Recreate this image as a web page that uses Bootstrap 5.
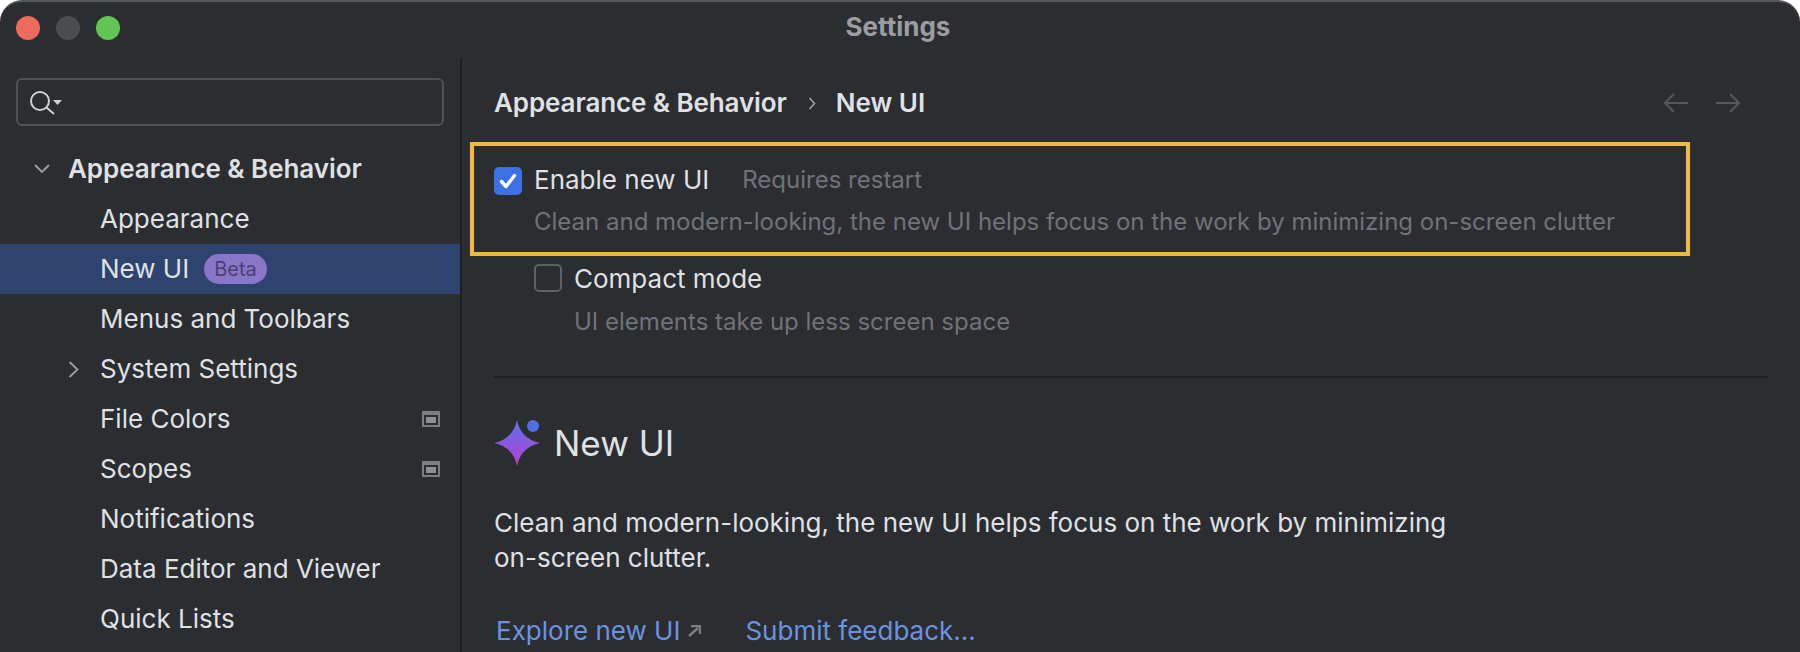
<!doctype html>
<html lang="en">
<head>
<meta charset="utf-8">
<title>Settings</title>
<link href="https://cdn.jsdelivr.net/npm/bootstrap@5.3.0/dist/css/bootstrap.min.css" rel="stylesheet">
<style>
html,body{height:100%;margin:0;background:#fff;overflow:hidden}
body{font-family:Inter,"Noto Sans",sans-serif;font-size:26px;line-height:34px;color:#dfe1e5}
.ij-window{height:652px;background:#2b2d30;border-top:2px solid #55575b;border-radius:22px 22px 0 0;overflow:hidden}
.ij-titlebar{height:56px;position:relative}
.ij-lights{position:absolute;left:16px;top:14px;gap:16px}
.ij-light{width:24px;height:24px;border-radius:50%}
.ij-title{font-weight:700;font-size:26px;color:#9b9da1;line-height:50px;text-align:center;padding-right:4px}
.ij-side{width:460px;flex:none}
.ij-search{margin:20px 16px 0;height:48px;border:2px solid #4e5157;border-radius:6px;padding-left:12px}
.ij-tree{margin-top:18px}
.ij-row{height:50px;padding-left:100px;padding-right:20px;position:relative}
.ij-row svg.ij-chev{position:absolute}
.ij-row.ij-head{padding-left:68px;font-weight:600;letter-spacing:-.05px}
.ij-row.ij-sel{background:#2e436e}
.ij-beta{background:#8a76c6;color:#4b3f75;font-size:20px;line-height:30px;padding:0 10px;border-radius:15px;margin-left:15px}
.ij-main{border-left:2px solid #1e1f22;min-width:0;padding-top:2px}
.ij-crumb{height:82px;padding:4px 60px 0 32px;font-weight:600}
.ij-crumb-first{letter-spacing:-.1px}
.ij-crumb-sep{margin:0 20px 0 21px}
.ij-nav{gap:28px}
.ij-hl{border:4px solid #f0b941;margin-left:8px;width:1220px;height:114px;padding:18px 0 0 20px}
.ij-box{width:28px;height:28px;border-radius:5px;flex:none}
.ij-box-on{background:#3c70e4}
.ij-box-off{border:2px solid #5e6167}
.ij-dim{color:#6f737a;font-size:24px}
.ij-up{line-height:32px;padding-bottom:2px}
.ij-down{line-height:32px;padding-top:2px}
.ij-req{margin-left:33px}
.ij-sub{padding:7px 0 0 40px}
.ij-compact{padding:5px 0 0 72px}
.ij-sub2{padding:10px 0 0 112px}
.ij-rule{border-top:2px solid #1e1f22;margin:37px 32px 0 32px}
.ij-hero{margin:42px 0 0 32px}
.ij-hero-t{font-size:35px;line-height:44px;padding-bottom:2px;font-weight:400;margin:0 0 0 13px}
.ij-para{margin:38px 0 0 32px;line-height:35px}
.ij-links{margin:39px 0 0 34px}
.ij-links a{color:#6b93e0;text-decoration:none}
.ij-submit{margin-left:44px}
</style>
</head>
<body>
<div class="ij-window d-flex flex-column">
  <div class="ij-titlebar flex-none">
    <div class="ij-lights d-flex">
      <div class="ij-light" style="background:#ec6a5e"></div>
      <div class="ij-light" style="background:#4b4c4e"></div>
      <div class="ij-light" style="background:#61c554"></div>
    </div>
    <div class="ij-title">Settings</div>
  </div>
  <div class="d-flex flex-grow-1">
    <div class="ij-side">
      <div class="ij-search d-flex align-items-center">
        <svg width="34" height="28" viewBox="0 0 34 28" fill="none"><circle cx="10" cy="13" r="9" stroke="#ced0d6" stroke-width="2"/><path d="M16.500 19.500l7.500 6.500" stroke="#ced0d6" stroke-width="2"/><path d="M23 12h9l-4.500 5z" fill="#ced0d6"/></svg>
      </div>
      <div class="ij-tree">
        <div class="ij-row ij-head d-flex align-items-center"><svg class="ij-chev" style="left:34px;top:20px" width="16" height="10" viewBox="0 0 16 10" fill="none"><path d="M1 1l7 7 7-7" stroke="#9da0a8" stroke-width="1.800"/></svg>Appearance &amp; Behavior</div>
        <div class="ij-row d-flex align-items-center">Appearance</div>
        <div class="ij-row ij-sel d-flex align-items-center">New UI<span class="ij-beta">Beta</span></div>
        <div class="ij-row d-flex align-items-center">Menus and Toolbars</div>
        <div class="ij-row d-flex align-items-center"><svg class="ij-chev" style="left:68px;top:17px" width="11" height="17" viewBox="0 0 11 17" fill="none"><path d="M1.500 1l8 7.500-8 7.500" stroke="#9da0a8" stroke-width="1.800"/></svg>System Settings</div>
        <div class="ij-row d-flex align-items-center justify-content-between">File Colors<svg width="18" height="16" viewBox="0 0 18 16"><path fill-rule="evenodd" d="M0 0h18v16H0zM2 4v10h14V4z" fill="#7a7e85"/><rect x="4" y="6" width="10" height="6" fill="#8b8f96"/></svg></div>
        <div class="ij-row d-flex align-items-center justify-content-between">Scopes<svg width="18" height="16" viewBox="0 0 18 16"><path fill-rule="evenodd" d="M0 0h18v16H0zM2 4v10h14V4z" fill="#7a7e85"/><rect x="4" y="6" width="10" height="6" fill="#8b8f96"/></svg></div>
        <div class="ij-row d-flex align-items-center">Notifications</div>
        <div class="ij-row d-flex align-items-center">Data Editor and Viewer</div>
        <div class="ij-row d-flex align-items-center">Quick Lists</div>
      </div>
    </div>
    <div class="ij-main flex-grow-1">
      <div class="ij-crumb d-flex align-items-center">
        <span class="ij-crumb-first">Appearance &amp; Behavior</span>
        <svg class="ij-crumb-sep" width="8" height="13" viewBox="0 0 8 13" fill="none"><path d="M1.500 1l5 5.500-5 5.500" stroke="#9da0a8" stroke-width="1.600"/></svg>
        <span>New UI</span>
        <span class="ms-auto d-flex ij-nav">
          <svg width="24" height="20" viewBox="0 0 24 20" fill="none"><path d="M24 10H2M10 1l-9 9 9 9" stroke="#55585d" stroke-width="2"/></svg>
          <svg width="24" height="20" viewBox="0 0 24 20" fill="none"><path d="M0 10h22M14 1l9 9-9 9" stroke="#55585d" stroke-width="2"/></svg>
        </span>
      </div>
      <div class="ij-hl">
        <div class="d-flex align-items-center">
          <span class="ij-box ij-box-on d-flex align-items-center justify-content-center"><svg width="18" height="16" viewBox="0 0 18 16" fill="none"><path d="M2.500 8.500l4.500 5 8.500-11" stroke="#fff" stroke-width="3.400" stroke-linecap="round" stroke-linejoin="round"/></svg></span>
          <span class="ms-2 ps-1 ij-up">Enable new UI</span>
          <span class="ij-dim ij-req ij-up">Requires restart</span>
        </div>
        <div class="ij-dim ij-sub">Clean and modern-looking, the new UI helps focus on the work by minimizing on-screen clutter</div>
      </div>
      <div class="d-flex align-items-center ij-compact">
        <span class="ij-box ij-box-off"></span>
        <span class="ms-2 ps-1 ij-down">Compact mode</span>
      </div>
      <div class="ij-dim ij-sub2">UI elements take up less screen space</div>
      <div class="ij-rule"></div>
      <div class="ij-hero d-flex align-items-center">
        <svg width="47" height="47" viewBox="0 0 47 47">
          <defs><linearGradient id="ijg" x1="0" y1="0" x2="0" y2="1"><stop offset="0" stop-color="#5c70ea"/><stop offset=".5" stop-color="#8a5ae0"/><stop offset="1" stop-color="#b83ed6"/></linearGradient></defs>
          <path d="M23 0Q27 19 46 23 27 27 23 46 19 27 0 23 19 19 23 0z" fill="url(#ijg)"/>
          <circle cx="39" cy="6" r="6" fill="#4f6fe8"/>
        </svg>
        <h1 class="ij-hero-t">New UI</h1>
      </div>
      <div class="ij-para">Clean and modern-looking, the new UI helps focus on the work by minimizing<br>on-screen clutter.</div>
      <div class="ij-links d-flex align-items-center">
        <a href="#">Explore new UI</a>
        <svg class="ms-2" width="13" height="12" viewBox="0 0 13 12" fill="none"><path d="M1 11l9-8M3 1h9v8" stroke="#7a7e85" stroke-width="2.400"/></svg>
        <a href="#" class="ij-submit">Submit feedback...</a>
      </div>
    </div>
  </div>
</div>
<script src="https://cdn.jsdelivr.net/npm/bootstrap@5.3.0/dist/js/bootstrap.bundle.min.js"></script>
</body>
</html>
